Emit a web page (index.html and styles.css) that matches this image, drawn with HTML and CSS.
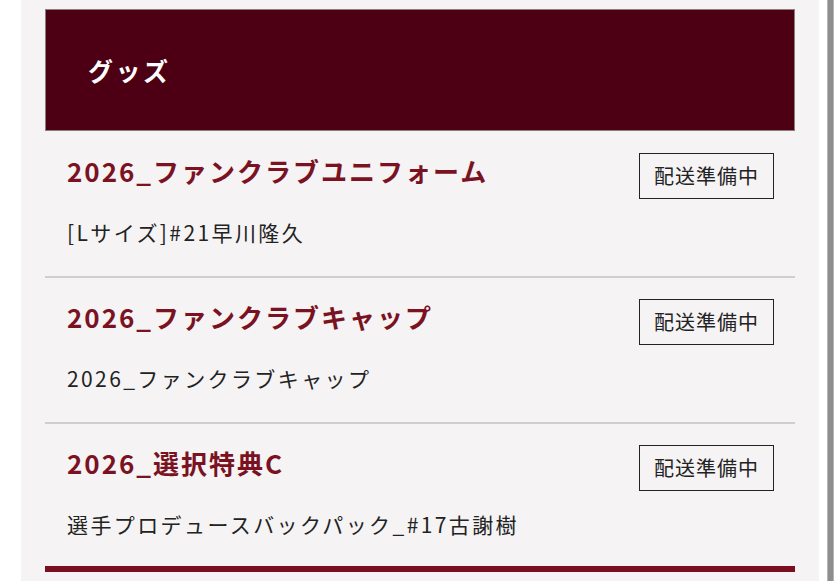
FILE: index.html
```html
<!DOCTYPE html>
<html lang="ja">
<head>
<meta charset="utf-8">
<title>グッズ</title>
<link rel="stylesheet" href="styles.css">
</head>
<body>
<div class="page">
  <main class="panel">
    <section class="goods">
      <header class="goods-head"><h2 class="goods-title">グッズ</h2></header>
      <ul class="goods-list">
        <li class="item">
          <div class="item-row">
            <h3 class="item-name">2026_ファンクラブユニフォーム</h3>
            <span class="badge">配送準備中</span>
          </div>
          <p class="item-sub">[Lサイズ]#21早川隆久</p>
        </li>
        <li class="item">
          <div class="item-row">
            <h3 class="item-name">2026_ファンクラブキャップ</h3>
            <span class="badge">配送準備中</span>
          </div>
          <p class="item-sub">2026_ファンクラブキャップ</p>
        </li>
        <li class="item">
          <div class="item-row">
            <h3 class="item-name">2026_選択特典C</h3>
            <span class="badge">配送準備中</span>
          </div>
          <p class="item-sub">選手プロデュースバックパック_#17古謝樹</p>
        </li>
      </ul>
      <div class="goods-end"></div>
    </section>
  </main>
  <div class="scrollbar"></div>
</div>
</body>
</html>
```

FILE: styles.css
```css
* { box-sizing: border-box; }
html, body { margin: 0; padding: 0; background: #ffffff; }
body {
  font-family: "Noto Sans CJK JP", "Noto Sans", sans-serif;
  color: #222222;
}
.page {
  display: flex;
  align-items: stretch;
  height: 100vh;
  overflow: hidden;
  padding-left: 21px;
}
.panel {
  width: 798px;
  background: #f5f3f4;
  padding: 9px 24px 0 24px;
}
.scrollbar {
  width: 7px;
  margin-left: 8px;
  background: #8e8e8e;
  border-left: 1px solid #b5b5b5;
  border-right: 1px solid #b5b5b5;
}
.goods-head {
  height: 122px;
  background: #4d0014;
  border: 1px solid #8a7d80;
  display: flex;
  align-items: center;
  padding-left: 42px;
}
.goods-title {
  margin: 0;
  color: #ffffff;
  font-size: 25px;
  font-weight: 700;
  letter-spacing: 2.5px;
  line-height: 1;
}
.goods-list {
  list-style: none;
  margin: 0;
  padding: 0;
}
.item {
  padding: 21px 21px 29px 22px;
  border-bottom: 2px solid #cfcfcf;
}
.item:first-child { padding-top: 22px; }
.item:last-child { border-bottom: none; padding-bottom: 27px; }
.item-row {
  display: flex;
  justify-content: space-between;
  align-items: flex-start;
}
.item-name {
  margin: 0;
  font-size: 26px;
  line-height: 36px;
  font-weight: 700;
  color: #7a1222;
  letter-spacing: 2px;
}
.badge {
  height: 46px;
  border: 1.5px solid #222222;
  padding: 0 14px;
  font-size: 20px;
  line-height: 43px;
  letter-spacing: 1px;
  color: #222222;
  background: transparent;
}
.item-sub {
  margin: 18px 0 0 0;
  font-size: 21px;
  line-height: 30px;
  letter-spacing: 2.4px;
  color: #222222;
}
.goods-end {
  height: 6px;
  background: #7a0f20;
}
```
